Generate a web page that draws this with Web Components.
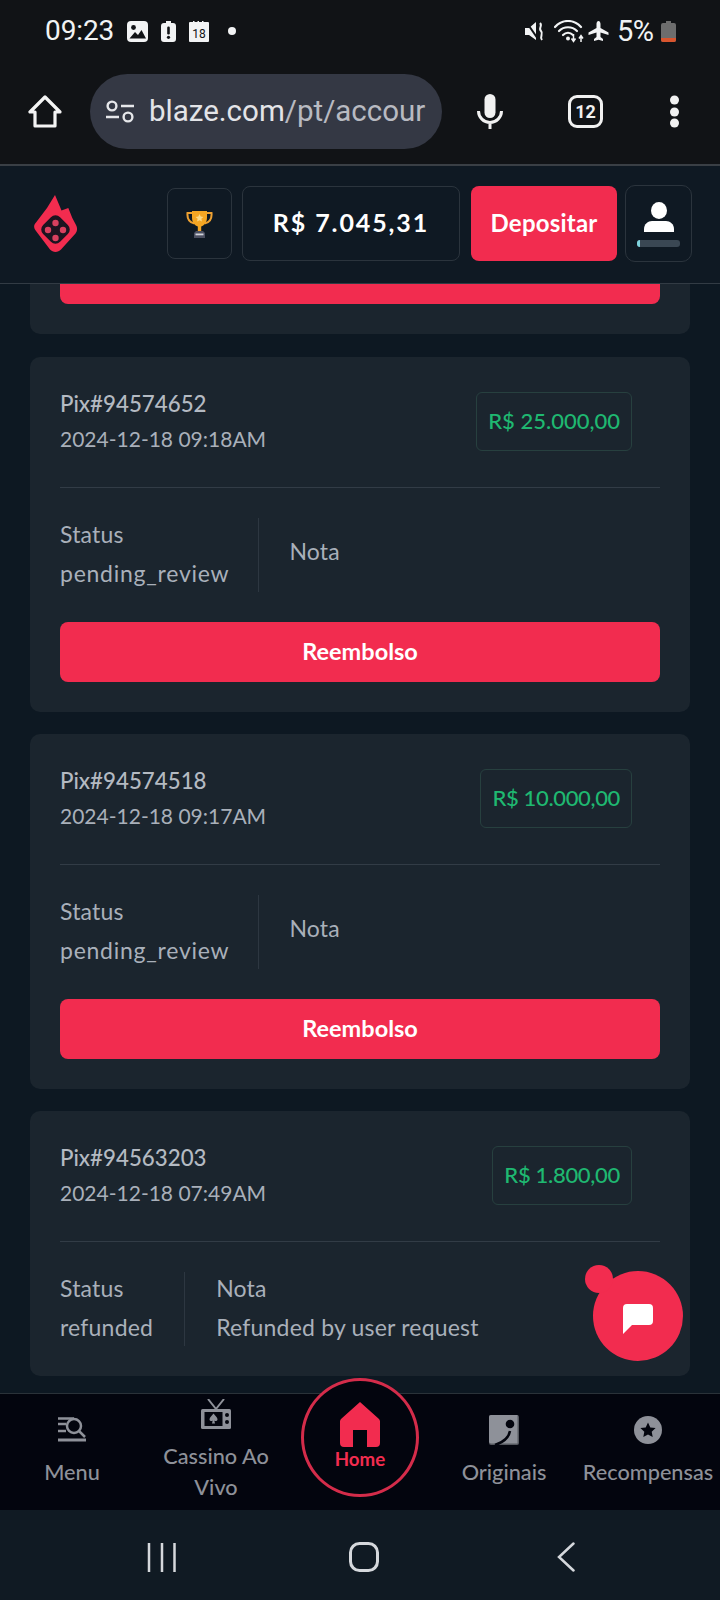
<!DOCTYPE html>
<html lang="pt"><head><meta charset="utf-8"><title>Blaze</title>
<style>
html,body{margin:0;padding:0;background:#0d1822;}
body{width:720px;height:1600px;overflow:hidden;font-family:Lato,"Noto Sans",sans-serif;}
</style></head><body>
<app-shell>
  <phone-status></phone-status>
  <browser-bar></browser-bar>
  <site-header></site-header>
  <tx-list>
    <tx-stub></tx-stub>
    <tx-card style="--st-ls:.75px;--pr:29px;--pl:30px" pix="Pix#94574652" date="2024-12-18 09:18AM" amount="R$ 25.000,00" status="pending_review" refund></tx-card>
    <tx-card style="--st-ls:.75px;--amt-ls:-.35px;--pr:29px;--pl:30px" pix="Pix#94574518" date="2024-12-18 09:17AM" amount="R$ 10.000,00" status="pending_review" refund></tx-card>
    <tx-card style="--amt-ls:-.3px" pix="Pix#94563203" date="2024-12-18 07:49AM" amount="R$ 1.800,00" status="refunded" note="Refunded by user request"></tx-card>
  </tx-list>
  <bottom-nav></bottom-nav>
  <system-nav></system-nav>
  <chat-fab></chat-fab>
</app-shell>
<script>
function def(name, html, init){
  const t=document.createElement('template'); t.innerHTML=html;
  customElements.define(name, class extends HTMLElement{
    constructor(){super();this.attachShadow({mode:'open'}).appendChild(t.content.cloneNode(true));}
    connectedCallback(){ if(init) init(this,this.shadowRoot); }
  });
}
def('app-shell',`<style>:host{display:flex;flex-direction:column;position:relative;width:720px;height:1600px;overflow:hidden;}</style><slot></slot>`);

def('phone-status',`<style>
:host{display:flex;align-items:center;height:62px;padding:0 44px 0 45px;box-sizing:border-box;background:#111316;color:#f2f3f4;font-family:Roboto,sans-serif;}
.t{font-size:28px;font-weight:400;width:70px;line-height:64px;letter-spacing:-.1px}
svg{display:block;flex:none}
.sp{flex:1}
.p{font-size:29px;font-weight:400;width:38px;letter-spacing:-.6px;line-height:64px}
</style>
<span class="t">09:23</span>
<svg style="margin-left:12px" width="21" height="21" viewBox="0 0 21 21"><rect width="21" height="21" rx="4" fill="#f2f3f4"/><circle cx="6.500" cy="6.500" r="2.400" fill="#111316"/><path d="M2.500 17.500 8 11l3 3 3.500-5 4.500 8.500z" fill="#111316"/></svg>
<svg style="margin-left:13px" width="15" height="21" viewBox="0 0 15 21"><path d="M5 0h5v2h2a3 3 0 0 1 3 3v13a3 3 0 0 1-3 3H3a3 3 0 0 1-3-3V5a3 3 0 0 1 3-3h2z" fill="#f2f3f4"/><rect x="6.200" y="5.500" width="2.600" height="8" rx="1.200" fill="#111316"/><circle cx="7.500" cy="16.300" r="1.600" fill="#111316"/></svg>
<svg style="margin-left:13px" width="20" height="21" viewBox="0 0 20 21"><path d="M1 1h3V0h1.500v1h3V0H10v1h3V0h1.500v1H19a1 1 0 0 1 1 1v18a1 1 0 0 1-1 1H1a1 1 0 0 1-1-1V2a1 1 0 0 1 1-1z" fill="#f2f3f4"/><text x="10" y="17" text-anchor="middle" font-family="Roboto" font-size="12" fill="#111316">18</text></svg>
<svg style="margin-left:19px" width="8" height="8" viewBox="0 0 8 8"><circle cx="4" cy="4" r="4" fill="#f2f3f4"/></svg>
<span class="sp"></span>
<svg width="19" height="19" viewBox="0 0 19 19"><path d="M0 6h4l7-6v18l-7-5H0z" fill="#f2f3f4"/><path d="M2 1l11 16" stroke="#111316" stroke-width="2"/><path d="M15 1c3 3-2 5 1 8s-2 5 1 9" fill="none" stroke="#f2f3f4" stroke-width="2"/></svg>
<svg style="margin-left:10px" width="30" height="23" viewBox="0 0 30 23"><g fill="none" stroke="#f2f3f4" stroke-width="2.200" stroke-linecap="round"><path d="M1 7C8 -1 20 -1 27 7"/><path d="M5 11c5-5 13-5 18 0"/><path d="M9 15c3-3 7-3 10 0"/></g><circle cx="14" cy="18.500" r="2" fill="#f2f3f4"/><path d="M19.500 14v7m-2-2.500 2 3 2-3M27 22v-6m-2 2.500 2-3 2 3" fill="none" stroke="#f2f3f4" stroke-width="1.500"/></svg>
<svg style="margin-left:4px" width="21" height="20" viewBox="0 0 21 20"><path d="M10.500 0c1.300 0 2 1.500 2 3v4l8 4.500V14l-8-2.500V16l2.500 2v2l-4.500-1.200L6 20v-2l2.500-2v-4.500L.5 14v-2.500L8.500 7V3c0-1.500.7-3 2-3z" fill="#f2f3f4"/></svg>
<span class="p" style="margin-left:8px">5%</span>
<svg style="margin-left:6px" width="15" height="21" viewBox="0 0 15 21"><path d="M5 0h5v2h3a2 2 0 0 1 2 2v15a2 2 0 0 1-2 2H2a2 2 0 0 1-2-2V4a2 2 0 0 1 2-2h3z" fill="#6d6d6d"/><path d="M0 17h15v2a2 2 0 0 1-2 2H2a2 2 0 0 1-2-2z" fill="#d9552e"/></svg>`);

def('browser-bar',`<style>
:host{display:flex;align-items:center;height:104px;box-sizing:border-box;background:#111316;border-bottom:2px solid #3a3f45;padding:0 0 3px 28px;color:#fff;}
svg{display:block;flex:none}
.pill{display:flex;align-items:center;box-sizing:border-box;width:352px;height:75px;margin-left:28px;background:#343844;border-radius:38px;padding:0 10px 0 16px;}
.u{margin-left:15px;white-space:nowrap;font:400 29.500px/75px Roboto,sans-serif;color:#b8bac1;}
.u b{font-weight:400;color:#e3e4e8}
.tabs{margin-left:65px;position:relative;box-sizing:border-box;width:35px;height:33px;border:3.500px solid #f1f1f1;border-radius:9px;display:flex;align-items:center;justify-content:center;font:700 18px Roboto,sans-serif;color:#f1f1f1;}
</style>
<svg width="34" height="33" viewBox="0 0 34 33"><path d="M17 2 2 17h5v14h20V17h5z" fill="none" stroke="#f4f4f4" stroke-width="3.200" stroke-linejoin="round"/></svg>
<div class="pill">
<svg width="28" height="23" viewBox="0 0 28 23"><g fill="none" stroke="#e6e7ea" stroke-width="2.400"><circle cx="6" cy="6" r="4.400"/><circle cx="22" cy="17" r="4.400"/><path d="M15 6h13M0 17h13"/></g></svg>
<div class="u"><b>blaze.com</b>/pt/accour</div></div>
<svg style="margin-left:35px" width="26" height="35" viewBox="0 0 26 35"><rect x="7.500" y="0" width="11" height="24" rx="5.500" fill="#f1f1f1"/><path d="M1.500 17a11.500 11.500 0 0 0 23 0M13 29v6" fill="none" stroke="#f1f1f1" stroke-width="3"/></svg>
<div class="tabs">12</div>
<svg style="margin-left:67px" width="9" height="33" viewBox="0 0 9 33"><circle cx="4.500" cy="5" r="4.500" fill="#f1f1f1"/><circle cx="4.500" cy="17" r="4.500" fill="#f1f1f1"/><circle cx="4.500" cy="28" r="4.500" fill="#f1f1f1"/></svg>`);

def('site-header',`<style>
:host{display:flex;align-items:center;height:118px;box-sizing:border-box;background:#0f1923;border-bottom:1px solid #323b44;padding:0 28px 2px 34px;color:#fff;}
svg{display:block;flex:none}
.b{box-sizing:border-box;border:1px solid #2b343d;border-radius:8px;display:flex;align-items:center;justify-content:center;flex:none;}
.tr{width:65px;height:71px;margin-left:90px;margin-right:10px}
.bal{width:218px;height:75px;padding-bottom:3px;font-size:25px;font-weight:700;letter-spacing:1.900px;margin-right:11px;white-space:nowrap}
.dep{box-sizing:border-box;width:146px;height:75px;padding-bottom:3px;background:#f22c4f;border-radius:8px;display:flex;align-items:center;justify-content:center;font-size:24px;font-weight:700;letter-spacing:.2px;margin-right:8px;flex:none}
.usr{width:67px;height:77px;flex-direction:column;border-radius:10px;padding-top:1px}
.bar{width:43px;height:7px;border-radius:3px;background:#3a4753;margin-top:8px;overflow:hidden}
.bar i{display:block;width:3px;height:7px;background:#7fd4de}
</style>
<svg width="43" height="57" viewBox="0 0 43 57"><path d="M21 0l6.500 15.500L34.300 13l4 10 3.700 7c1.500 3 1.500 6-.5 8.500L27 54.500c-3 3.300-8 3.300-11 0L2 36c-2.500-3-2.500-6 0-8.500L13 13z" fill="#f22c4f"/><rect x="9.500" y="22.500" width="24" height="24" rx="6.500" transform="rotate(45 21.500 34.500)" fill="#1c1420"/><circle cx="21.500" cy="28" r="3.200" fill="#d8405f"/><circle cx="21.500" cy="43" r="3.200" fill="#d8405f"/><circle cx="14" cy="35" r="3.200" fill="#d8405f"/><circle cx="29" cy="35" r="3.200" fill="#d8405f"/></svg>
<div class="b tr"><svg width="27" height="28" viewBox="0 0 27 28"><path d="M6 3H1.500c-.5 5.500 2 9.500 7 10.500M21 3h4.500c.5 5.500-2 9.500-7 10.500" fill="none" stroke="#eea132" stroke-width="2"/><path d="M6 1h15v6.500c0 5-3 8-5.800 9V21h-3.400v-4.500C9 15.500 6 12.500 6 7.500z" fill="#f5a623"/><path d="M13.500 4l1.200 2.500 2.700.4-2 1.900.5 2.700-2.400-1.300-2.400 1.300.5-2.700-2-1.900 2.700-.4z" fill="#fbd987"/><path d="M10 21h7l2 2v5H8v-5z" fill="#4b4f60"/><rect x="9.500" y="23.500" width="8" height="1.800" fill="#cfd2da"/></svg></div>
<div class="b bal">R$ 7.045,31</div>
<div class="dep">Depositar</div>
<div class="b usr"><svg width="30" height="30" viewBox="0 0 30 30"><ellipse cx="15" cy="8.500" rx="8" ry="8.500" fill="#fff"/><path d="M0 30v-3c0-5 4-8 8-8h14c4 0 8 3 8 8v3z" fill="#fff"/></svg><div class="bar"><i></i></div></div>`);

def('tx-list',`<style>:host{display:flex;flex-direction:column;gap:22px;flex:1;min-height:0;overflow:hidden;padding:0 30px;background:#0d1822;}</style><slot></slot>`);

def('tx-stub',`<style>
:host{display:block;flex:none;box-sizing:border-box;height:50px;margin-bottom:1px;padding:0 30px 30px;background:#1b252e;border-radius:0 0 10px 10px;}
div{height:20px;background:#f22c4f;border-radius:0 0 8px 8px}
</style><div></div>`);

def('tx-card',`<style>
:host{display:block;flex:none;box-sizing:border-box;padding:0 30px 30px;background:#1b252e;border-radius:10px;color:#a9b0ba;font-size:23px;}
.head{display:flex;align-items:center;justify-content:space-between;height:131px;box-sizing:border-box;border-bottom:1px solid #323c46;padding-right:28px}
.txt{padding-bottom:2px}
.l{line-height:35px;white-space:nowrap;font-size:21px}
.pix{color:#b4bac2;font-weight:500;font-size:22.300px}
.amt{box-sizing:border-box;height:59px;margin-bottom:1px;padding:0 11px 2px;display:flex;align-items:center;border:1px solid #27403f;border-radius:6px;color:#1fb871;font-weight:500;font-size:22px;letter-spacing:var(--amt-ls,0);white-space:nowrap}
.row{display:flex;margin-top:30px;height:74px}
.c{display:flex;flex-direction:column;justify-content:center;line-height:39px;white-space:nowrap;letter-spacing:.2px;box-sizing:border-box;padding-bottom:2px}
.c1{padding-right:var(--pr,31px);border-right:1px solid #2d3741}
.c2{padding-left:var(--pl,31px);}
.c2.solo{padding-bottom:8px}
.st{letter-spacing:var(--st-ls,.2px)}
.btn{box-sizing:border-box;margin-top:30px;height:60px;padding-bottom:3px;background:#f22c4f;border-radius:8px;color:#fff;font-weight:700;font-size:23.500px;display:flex;align-items:center;justify-content:center}
</style>
<div class="head"><div class="txt"><div class="l pix"></div><div class="l date"></div></div><div class="amt"></div></div>
<div class="row"><div class="c c1"><span>Status</span><span class="st"></span></div><div class="c c2"><span>Nota</span><span class="nt"></span></div></div>
<div class="btn">Reembolso</div>`,(h,s)=>{
  const a=n=>h.getAttribute(n)||'';
  s.querySelector('.pix').textContent=a('pix');
  s.querySelector('.date').textContent=a('date');
  s.querySelector('.amt').textContent=a('amount');
  s.querySelector('.st').textContent=a('status');
  const n=s.querySelector('.nt');
  if(a('note')) n.textContent=a('note'); else { n.remove(); s.querySelector('.c2').classList.add('solo'); }
  if(!h.hasAttribute('refund')) s.querySelector('.btn').remove();
});

def('nav-item',`<style>
:host{display:flex;flex-direction:column;align-items:center;justify-content:center;width:144px;flex:none;color:#8e9199;font-size:21.700px;font-weight:500;line-height:31px;text-align:center;padding-bottom:2px;box-sizing:border-box}
.i{height:30px;display:flex;align-items:center;justify-content:center;margin-bottom:12px}
.x{white-space:nowrap}
</style><div class="i"><slot name="icon"></slot></div><div class="x"><slot></slot></div>`);

def('bottom-nav',`<style>
:host{display:flex;position:relative;height:117px;box-sizing:border-box;background:#03050e;border-top:1px solid #2a3239;flex:none;}
svg{display:block}
.home{position:relative;width:144px;flex:none;display:flex;flex-direction:column;align-items:center;color:#f22c4f;font-weight:700;font-size:18.700px;}
.ring{position:absolute;left:13px;top:-16px;width:118px;height:119px;box-sizing:border-box;border:3px solid #d42c4a;border-radius:50%;background:#03050e;display:flex;flex-direction:column;align-items:center;padding-top:21px;}
.ring span{line-height:26px;margin-top:-1px}
</style>
<nav-item>
<svg slot="icon" width="28" height="25" viewBox="0 0 28 25"><g fill="none" stroke="#8e9199" stroke-width="2.500"><path d="M0 1.500h16M0 7h8M0 14h8"/><path d="M0 23h28" stroke-width="3"/><circle cx="16" cy="9" r="7"/><path d="M21 14l6 6"/></g></svg>
Menu</nav-item>
<nav-item>
<svg slot="icon" width="30" height="30" viewBox="0 0 30 30"><path d="M7 0l8 10 8-10" fill="none" stroke="#8e9199" stroke-width="2"/><rect y="10" width="30" height="20" rx="1.500" fill="#8e9199"/><rect x="3.500" y="13" width="18" height="14" fill="#03050e"/><path d="M12.500 14.500c2 2.500 4 4 4 6 0 1.500-2 2-3.200 1l.7 3h-3l.7-3c-1.200 1-3.200.5-3.200-1 0-2 2-3.500 4-6z" fill="#8e9199"/><circle cx="26" cy="16" r="2" fill="#03050e"/><circle cx="26" cy="23" r="2" fill="#03050e"/></svg>
Cassino Ao<br>Vivo</nav-item>
<div class="home"><div class="ring">
<svg width="40" height="45" viewBox="0 0 40 45"><path d="M20 0 39 17c.7.700 1 1.500 1 2.500V41a4 4 0 0 1-4 4h-9V28H13v17H4a4 4 0 0 1-4-4V19.500c0-1 .3-1.800 1-2.500z" fill="#f22c4f"/></svg>
<span>Home</span></div></div>
<nav-item>
<svg slot="icon" width="30" height="30" viewBox="0 0 30 30"><rect width="30" height="30" rx="2" fill="#55585f"/><path d="M2 0h26.500v28.500H2a2 2 0 0 1-2-2V2a2 2 0 0 1 2-2z" fill="#8e9199"/><circle cx="21" cy="9" r="4.300" fill="#03050e"/><path d="M21 16c-1 6-6 11-15 14" fill="none" stroke="#03050e" stroke-width="2.500"/></svg>
Originais</nav-item>
<nav-item>
<svg slot="icon" width="28" height="28" viewBox="0 0 28 28"><circle cx="14" cy="14" r="14" fill="#8e9199"/><path d="M14 6.500l2.300 4.900 5.300.7-3.900 3.700 1 5.300L14 18.500l-4.700 2.600 1-5.300-3.900-3.700 5.300-.7z" fill="#03050e"/></svg>
Recompensas</nav-item>`);

def('system-nav',`<style>
:host{display:flex;align-items:center;flex:none;height:90px;background:#101a23;padding:4px 0 0 147px;box-sizing:border-box;}
svg{display:block;flex:none}
</style>
<svg width="30" height="29" viewBox="0 0 30 29"><path d="M2 0v29M15 0v29M27.500 0v29" stroke="#d5d8dc" stroke-width="2.500"/></svg>
<svg style="margin-left:172px" width="30" height="30" viewBox="0 0 30 30"><rect x="1.500" y="1.500" width="27" height="27" rx="9" fill="none" stroke="#d5d8dc" stroke-width="3"/></svg>
<svg style="margin-left:178px" width="18" height="30" viewBox="0 0 18 30"><path d="M16.500 1.500 2 15l14.500 13.500" fill="none" stroke="#d5d8dc" stroke-width="2.500" stroke-linecap="round"/></svg>`);

def('chat-fab',`<style>
:host{position:absolute;left:593px;top:1271px;width:90px;height:90px;border-radius:50%;background:#f22c4f;display:flex;align-items:center;justify-content:center;}
.dot{position:absolute;left:-8px;top:-6px;width:28px;height:28px;border-radius:50%;background:#f22c4f}
svg{display:block;margin-top:6px}
</style><div class="dot"></div>
<svg width="30" height="30" viewBox="0 0 30 30"><path d="M4 0h22a4 4 0 0 1 4 4v13a4 4 0 0 1-4 4H9L0 30V4a4 4 0 0 1 4-4z" fill="#fff"/></svg>`);
</script>
</body></html>
